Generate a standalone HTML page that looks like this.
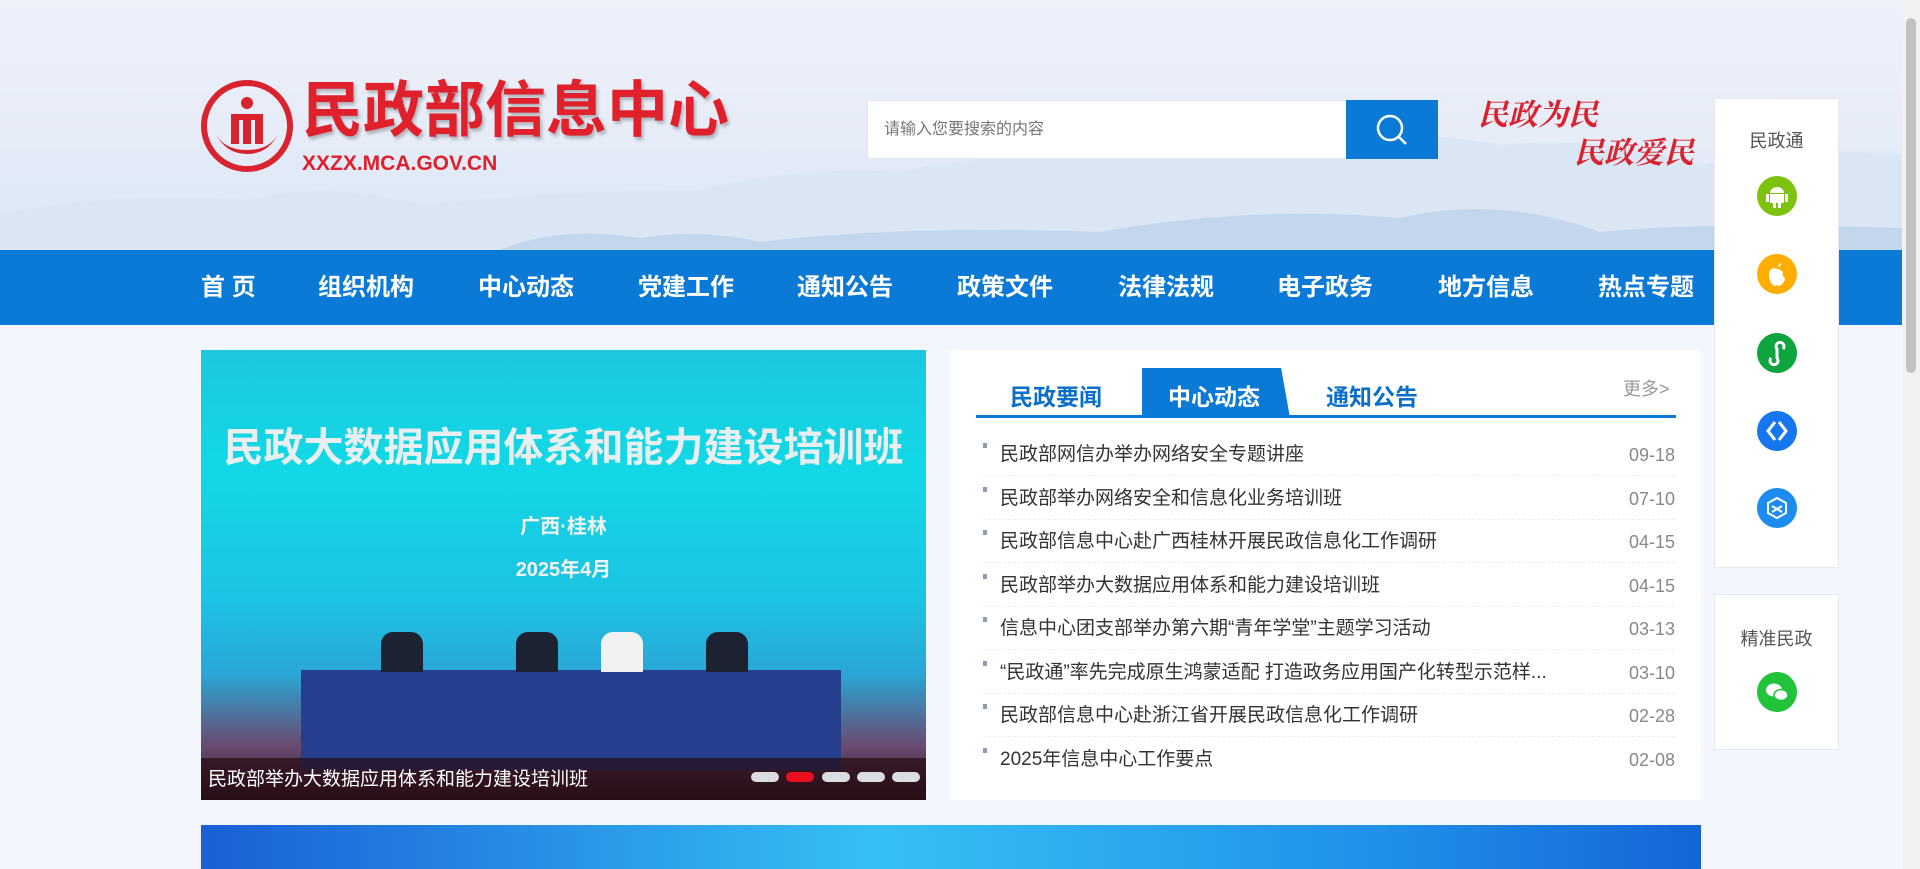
<!DOCTYPE html>
<html><head><meta charset="utf-8"><style>
*{margin:0;padding:0;box-sizing:border-box}
body{width:1920px;height:869px;overflow:hidden;background:#f3f7fd;font-family:"Liberation Sans","Noto Sans CJK SC",sans-serif;position:relative}
.hdr{position:absolute;left:0;top:0;width:1902px;height:250px;background:linear-gradient(180deg,#eef1fa 0%,#e6ecf8 55%,#d9e6f6 100%);overflow:hidden}
.nav{position:absolute;left:0;top:250px;width:1902px;height:75px;background:#0b7ad6}
.nav span{position:absolute;top:0;line-height:75px;color:#fff;font-size:24px;font-weight:bold}
.abs{position:absolute}
.panel{position:absolute;background:#fff;border:1px solid #e6eaf0}
.ic{position:absolute;left:50%;width:40px;height:40px;margin-left:-20px;border-radius:50%}
.row{position:absolute;left:983px;width:692px;height:44px;border-bottom:1px dashed #eceef2;font-size:19px;color:#333}
.row i{position:absolute;left:0;top:11px;width:4px;height:5px;background:#8c9db3}
.row b{font-weight:normal;position:absolute;left:17px;top:7px;white-space:nowrap}
.row em{font-style:normal;position:absolute;right:0;top:13px;color:#888;font-size:18px}
.dot{position:absolute;top:772px;width:28px;height:10px;border-radius:5px;background:#dcdde2}
</style></head><body>
<div class="hdr">
<svg width="1902" height="250" style="position:absolute;left:0;top:0">
<path d="M0 250 L0 215 Q120 190 250 200 Q330 180 420 205 Q560 190 700 190 Q800 165 900 172 Q1000 150 1100 160 Q1200 140 1300 150 Q1400 125 1500 145 Q1600 135 1700 165 Q1800 145 1902 155 L1902 250Z" fill="#dbe6f4"/>
<path d="M500 250 Q560 225 640 238 Q700 228 760 242 Q900 225 1100 232 Q1250 205 1400 218 Q1500 195 1600 232 Q1700 222 1902 228 L1902 250Z" fill="#c3d6ec"/>
</svg>
<svg class="abs" style="left:201px;top:80px" width="94" height="92" viewBox="0 0 94 92">
<circle cx="46" cy="46" r="43" fill="none" stroke="#d9232e" stroke-width="6"/>
<circle cx="46" cy="23" r="6" fill="#d9232e"/>
<path d="M30 34h32v30h-8V40h-4v24h-8V40h-4v24h-8z" fill="#d9232e"/>
<path d="M14 52q10 22 32 22q22 0 32-22q-8 18-32 18q-24 0-32-18z" fill="#d9232e"/>
</svg>
<div class="abs" style="left:302px;top:72px;font-size:61px;font-weight:bold;color:#e0202b;text-shadow:2px 3px 3px rgba(0,0,0,.25);line-height:76px">民政部信息中心</div>
<div class="abs" style="left:302px;top:152px;font-size:21px;font-weight:bold;color:#e0202b;line-height:24px">XXZX.MCA.GOV.CN</div>
<div class="abs" style="left:867px;top:100px;width:480px;height:59px;background:#fff;border:1px solid #e3e6ec;font-size:16px;color:#777;line-height:57px;padding-left:16px">请输入您要搜索的内容</div>
<div class="abs" style="left:1346px;top:100px;width:92px;height:59px;background:#0b7ad6">
<svg width="92" height="59"><circle cx="44" cy="28" r="12" fill="none" stroke="#fff" stroke-width="2.5"/><path d="M53 37l7 7" stroke="#fff" stroke-width="2.5"/></svg></div>
<div class="abs" style="left:1478px;top:90px;font-size:30px;color:#d8232e;font-family:'Noto Serif CJK SC',serif;font-style:italic;font-weight:bold">民政为民</div>
<div class="abs" style="left:1574px;top:128px;font-size:30px;color:#d8232e;font-family:'Noto Serif CJK SC',serif;font-style:italic;font-weight:bold">民政爱民</div>
</div>
<div class="nav">
<span style="left:201px">首 页</span><span style="left:318px">组织机构</span><span style="left:478px">中心动态</span><span style="left:638px">党建工作</span><span style="left:797px">通知公告</span><span style="left:957px">政策文件</span><span style="left:1118px">法律法规</span><span style="left:1277px">电子政务</span><span style="left:1438px">地方信息</span><span style="left:1598px">热点专题</span>
</div>
<div class="abs" style="left:201px;top:350px;width:725px;height:450px;overflow:hidden;background:linear-gradient(180deg,#1cc7dd 0%,#12d8e6 25%,#1bc4e2 55%,#2aa6d6 72%,#6a4a70 88%,#2a1a22 100%)">
<div class="abs" style="left:0;top:65px;width:725px;text-align:center;font-size:40px;font-weight:bold;color:#e9eef0;white-space:nowrap">民政大数据应用体系和能力建设培训班</div>
<div class="abs" style="left:0;top:160px;width:725px;text-align:center;font-size:20px;font-weight:bold;color:#f3f3f3">广西·桂林</div>
<div class="abs" style="left:0;top:203px;width:725px;text-align:center;font-size:20px;font-weight:bold;color:#f3f3f3">2025年4月</div>
<div class="abs" style="left:100px;top:320px;width:540px;height:100px;background:#253f8e"></div>
<div class="abs" style="left:180px;top:282px;width:42px;height:40px;background:#1d2233;border-radius:12px 12px 0 0"></div>
<div class="abs" style="left:315px;top:282px;width:42px;height:40px;background:#1d2233;border-radius:12px 12px 0 0"></div>
<div class="abs" style="left:400px;top:282px;width:42px;height:40px;background:#f2f2f2;border-radius:12px 12px 0 0"></div>
<div class="abs" style="left:505px;top:282px;width:42px;height:40px;background:#1d2233;border-radius:12px 12px 0 0"></div>
<div class="abs" style="left:0;top:408px;width:725px;height:42px;background:rgba(40,10,20,.7)"></div>
<div class="abs" style="left:7px;top:414px;font-size:19px;color:#fff">民政部举办大数据应用体系和能力建设培训班</div>
</div>
<div class="dot" style="left:751px"></div><div class="dot" style="left:786px;background:#e8101c"></div><div class="dot" style="left:822px"></div><div class="dot" style="left:857px"></div><div class="dot" style="left:892px"></div>
<div class="abs" style="left:950px;top:350px;width:751px;height:450px;background:#fff"></div>
<div class="abs" style="left:976px;top:415px;width:700px;height:3px;background:#0b7ad6"></div>
<div class="abs" style="left:1142px;top:368px;width:148px;height:50px;background:#0b7ad6;clip-path:polygon(0 0,94% 0,100% 100%,0 100%)"></div>
<div class="abs" style="left:1010px;top:378px;font-size:23px;font-weight:bold;color:#0b6fc8">民政要闻</div>
<div class="abs" style="left:1168px;top:378px;font-size:23px;font-weight:bold;color:#fff">中心动态</div>
<div class="abs" style="left:1326px;top:378px;font-size:23px;font-weight:bold;color:#0b6fc8">通知公告</div>
<div class="abs" style="left:1623px;top:375px;font-size:18px;color:#999">更多&gt;</div>
<div class="row" style="top:432px"><i></i><b>民政部网信办举办网络安全专题讲座</b><em>09-18</em></div>
<div class="row" style="top:476px"><i></i><b>民政部举办网络安全和信息化业务培训班</b><em>07-10</em></div>
<div class="row" style="top:519px"><i></i><b>民政部信息中心赴广西桂林开展民政信息化工作调研</b><em>04-15</em></div>
<div class="row" style="top:563px"><i></i><b>民政部举办大数据应用体系和能力建设培训班</b><em>04-15</em></div>
<div class="row" style="top:606px"><i></i><b>信息中心团支部举办第六期“青年学堂”主题学习活动</b><em>03-13</em></div>
<div class="row" style="top:650px"><i></i><b>“民政通”率先完成原生鸿蒙适配 打造政务应用国产化转型示范样...</b><em>03-10</em></div>
<div class="row" style="top:693px"><i></i><b>民政部信息中心赴浙江省开展民政信息化工作调研</b><em>02-28</em></div>
<div class="row" style="top:737px;border:none"><i></i><b>2025年信息中心工作要点</b><em>02-08</em></div>
<div class="abs" style="left:201px;top:825px;width:1500px;height:44px;background:linear-gradient(90deg,#1a5fd6,#35c0f5 45%,#1f8ee8 80%,#1565d8)"></div>
<div class="panel" style="left:1714px;top:98px;width:125px;height:470px">
<div class="abs" style="left:0;top:28px;width:123px;text-align:center;font-size:18px;color:#555">民政通</div>
<div class="ic" style="top:77px;background:#7cc20f"><svg width="40" height="40"><path d="M13 17a7 6 0 0 1 14 0z M13 18h14v9H13z M9 18h3v8H9z M28 18h3v8h-3z M16 27h3v5h-3z M21 27h3v5h-3z" fill="#fff"/></svg></div>
<div class="ic" style="top:155px;background:#ffae00"><svg width="40" height="40"><path d="M20 15c-3-2-8-1-8 6s4 11 6 11c1 0 2-1 2-1s1 1 2 1c2 0 6-4 6-8-2-1-3-3-2-6-1-1-3-3-6-3z M21 13c0-2 2-4 3-4 0 2-1 4-3 4z" fill="#fff"/></svg></div>
<div class="ic" style="top:234px;background:#0ea53f"><svg width="40" height="40"><path d="M14 25a4 4 0 1 0 6 0V16a4 4 0 1 1 6 0" fill="none" stroke="#fff" stroke-width="3"/></svg></div>
<div class="ic" style="top:312px;background:#1676ee"><svg width="40" height="40"><path d="M18 11l-7 9 7 9M22 11l7 9-7 9" fill="none" stroke="#fff" stroke-width="3"/></svg></div>
<div class="ic" style="top:389px;background:#1d8cf0"><svg width="40" height="40"><path d="M20 10l9 5v10l-9 5-9-5V15z M15 18l10 6 M25 18l-10 6" fill="none" stroke="#fff" stroke-width="2"/></svg></div>
</div>
<div class="panel" style="left:1714px;top:594px;width:125px;height:156px">
<div class="abs" style="left:0;top:30px;width:123px;text-align:center;font-size:18px;color:#555">精准民政</div>
<div class="ic" style="top:77px;background:#22c23a"><svg width="40" height="40"><ellipse cx="17" cy="18" rx="8" ry="6.5" fill="#fff"/><ellipse cx="24" cy="23" rx="7" ry="5.5" fill="#fff" stroke="#22c23a" stroke-width="1.5"/></svg></div>
</div>
<div class="abs" style="left:1902px;top:0;width:18px;height:869px;background:#f1f1f1"></div>
<div class="abs" style="left:1906px;top:18px;width:10px;height:355px;background:#c1c1c1;border-radius:5px"></div>
</body></html>
